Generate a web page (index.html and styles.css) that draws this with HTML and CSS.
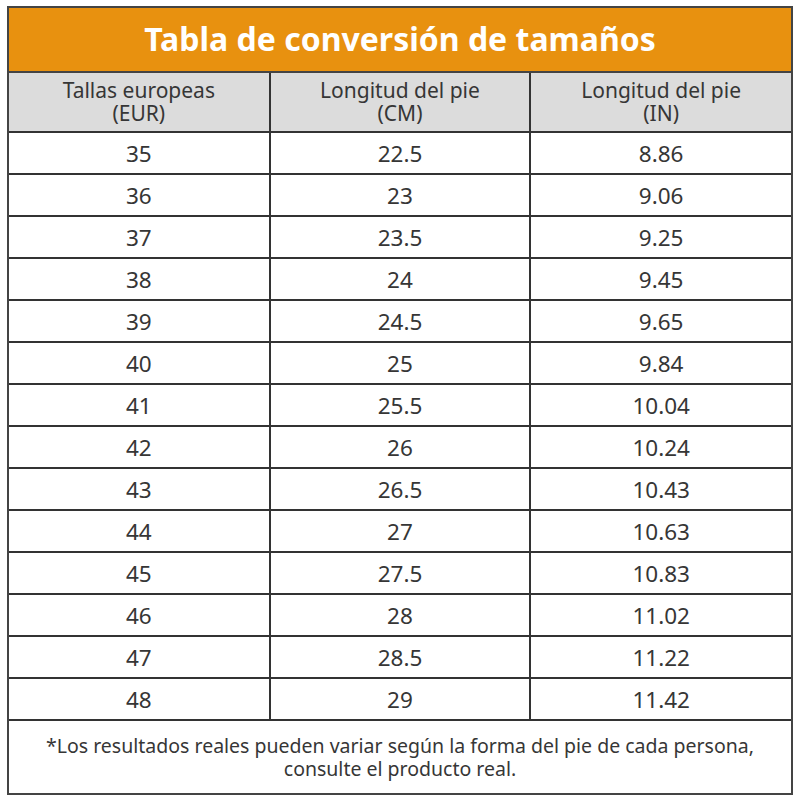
FILE: index.html
```html
<!DOCTYPE html>
<html lang="es">
<head>
<meta charset="utf-8">
<link rel="stylesheet" href="styles.css">
</head>
<body>
<div class="chart">
  <div class="title">Tabla de conversión de tamaños</div>
  <table class="sizes">
    <thead>
      <tr><th>Tallas europeas<br>(EUR)</th><th>Longitud del pie<br>(CM)</th><th>Longitud del pie<br>(IN)</th></tr>
    </thead>
    <tbody>
      <tr><td>35</td><td>22.5</td><td>8.86</td></tr>
      <tr><td>36</td><td>23</td><td>9.06</td></tr>
      <tr><td>37</td><td>23.5</td><td>9.25</td></tr>
      <tr><td>38</td><td>24</td><td>9.45</td></tr>
      <tr><td>39</td><td>24.5</td><td>9.65</td></tr>
      <tr><td>40</td><td>25</td><td>9.84</td></tr>
      <tr><td>41</td><td>25.5</td><td>10.04</td></tr>
      <tr><td>42</td><td>26</td><td>10.24</td></tr>
      <tr><td>43</td><td>26.5</td><td>10.43</td></tr>
      <tr><td>44</td><td>27</td><td>10.63</td></tr>
      <tr><td>45</td><td>27.5</td><td>10.83</td></tr>
      <tr><td>46</td><td>28</td><td>11.02</td></tr>
      <tr><td>47</td><td>28.5</td><td>11.22</td></tr>
      <tr><td>48</td><td>29</td><td>11.42</td></tr>
    </tbody>
  </table>
  <div class="note">*Los resultados reales pueden variar según la forma del pie de cada persona,<br>consulte el producto real.</div>
</div>
</body>
</html>
```

FILE: styles.css
```css
html, body {
  margin: 0;
  padding: 0;
  background: #ffffff;
}
body {
  font-family: "Noto Sans", "Open Sans", sans-serif;
  color: #363636;
}
.chart {
  width: 786px;
  margin: 6px 0 0 7px;
  border: 2px solid #444444;
  box-sizing: border-box;
}
.title {
  height: 65px;
  background: #e8910f;
  color: #ffffff;
  font-weight: 700;
  font-size: 32px;
  display: flex;
  align-items: center;
  justify-content: center;
  border-bottom: 2px solid #444444;
  box-sizing: border-box;
  padding-bottom: 2px;
}
.sizes {
  width: 100%;
  border-collapse: collapse;
  table-layout: fixed;
}
.sizes th, .sizes td {
  border: 2px solid #333333;
  text-align: center;
  padding: 0;
}
.sizes tr > :first-child { border-left: none; }
.sizes tr > :last-child { border-right: none; }
.sizes thead tr > * { border-top: none; }
.sizes th {
  background: #dcdcdc;
  font-weight: 400;
  font-size: 21px;
  line-height: 23px;
  height: 58px;
  color: #363636;
}
.sizes td {
  font-size: 22.5px;
  height: 40px;
}
.note {
  height: 72px;
  font-size: 19.5px;
  line-height: 23px;
  text-align: center;
  padding-top: 13px;
  box-sizing: border-box;
  color: #363636;
}
```
